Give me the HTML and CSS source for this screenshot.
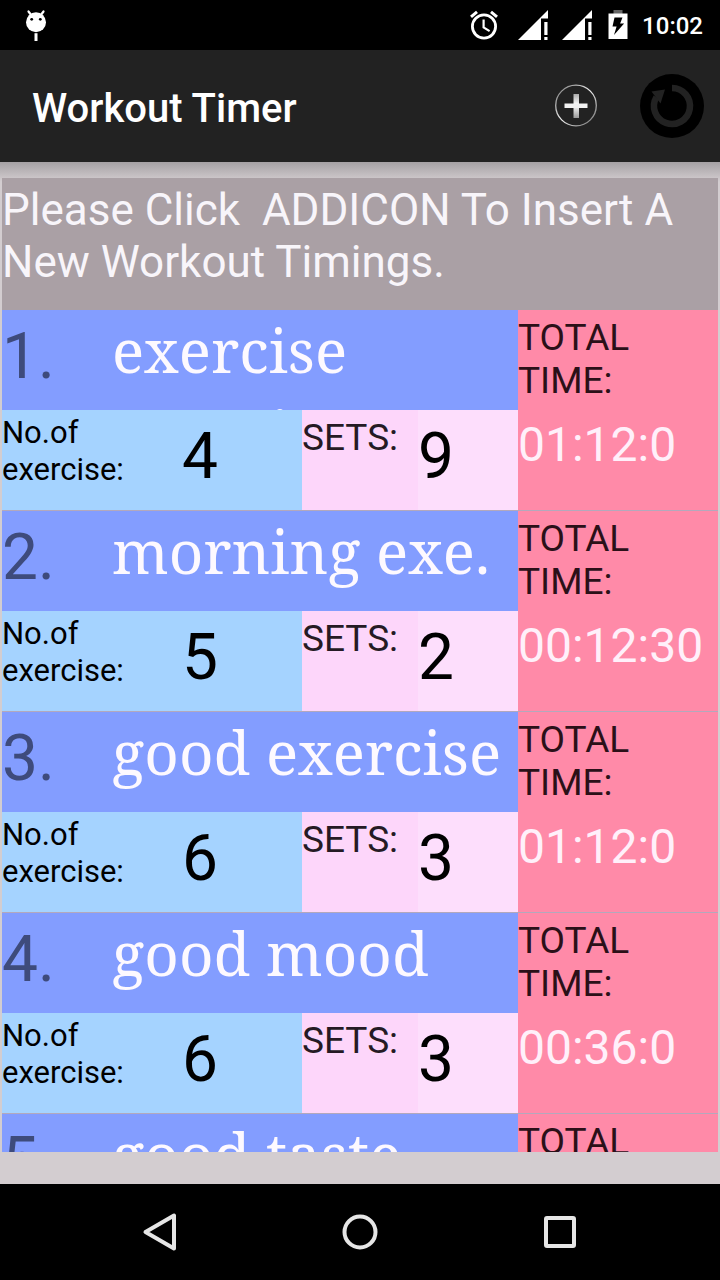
FILE: index.html
```html
<!DOCTYPE html>
<html lang="en">
<head>
    <meta charset="UTF-8">
    <meta name="viewport" content="width=device-width, initial-scale=1.0">
    <title>Workout Timer</title>
    <link rel="stylesheet" href="styles.css">
</head>
<body>
    <div class="statusBar">
        <svg class="droid" width="24" height="34" viewBox="0 0 24 34">
            <path d="M4.500 2.500l3 4M19.500 2.500l-3 4" stroke="#fff" stroke-width="2.200" stroke-linecap="round"/>
            <circle cx="12" cy="13.200" r="10" fill="#fff"/>
            <circle cx="7.700" cy="10.300" r="1.400"/>
            <circle cx="16.300" cy="10.300" r="1.400"/>
            <path d="M10.500 24.200h3v7.800h-3z" fill="#fff"/>
        </svg>
        <svg class="alarm" width="30" height="30" viewBox="0 0 30 30" fill="none" stroke="#fff">
            <circle cx="15" cy="16.500" r="11.600" stroke-width="2.800"/>
            <path d="M2 6.800l6-5M28 6.800l-6-5" stroke-width="3"/>
            <path d="M14.600 9.500v8l6 3.600" stroke-width="2.200"/>
        </svg>
        <svg class="signal" width="30" height="30" viewBox="0 0 30 30" fill="#fff">
            <path d="M0 30L30 0v8.500h-7V30z"/>
            <path d="M26.300 12h3.200v13h-3.200zM26.300 27h3.200v3h-3.200z"/>
        </svg>
        <svg class="signal" width="30" height="30" viewBox="0 0 30 30" fill="#fff">
            <path d="M0 30L30 0v8.500h-7V30z"/>
            <path d="M26.300 12h3.200v13h-3.200zM26.300 27h3.200v3h-3.200z"/>
        </svg>
        <svg class="battery" width="20" height="30" viewBox="0 0 20 30">
            <path d="M5.500 0h9v4h-9z" fill="#666"/>
            <path d="M.5 3.500h19V29H.5z" fill="#fff"/>
            <path d="M6.500 7.500h8l-2.400 6h4L6 25l2.600-8.500H4.500z"/>
        </svg>
        <span class="clock">10:02</span>
    </div>

    <div class="actionBar">
        <h1>Workout Timer</h1>
        <svg class="addBtn" width="44" height="44" viewBox="0 0 44 44">
            <defs>
                <linearGradient id="ring" x1="0" y1="0" x2="1" y2="1">
                    <stop offset="0" stop-color="#888"/>
                    <stop offset=".15" stop-color="#999"/>
                    <stop offset=".5" stop-color="#eee"/>
                    <stop offset=".8" stop-color="#999"/>
                    <stop offset="1" stop-color="#777"/>
                </linearGradient>
                <linearGradient id="bar" x1="0" y1="0" x2="0" y2="1">
                    <stop offset="0" stop-color="#aaa"/>
                    <stop offset=".45" stop-color="#fff"/>
                    <stop offset="1" stop-color="#999"/>
                </linearGradient>
            </defs>
            <circle cx="22" cy="21.500" r="20.300" fill="none" stroke="url(#ring)" stroke-width="1.300"/>
            <path d="M19.500 10h5.500v24h-5.500z" fill="url(#bar)"/>
            <path d="M10.500 19.500h23v4.500h-23z" fill="#f2f2f2"/>
        </svg>
        <svg class="resetBtn" width="64" height="64" viewBox="0 0 64 64">
            <circle cx="32" cy="32" r="32"/>
            <path d="M32 14a18 18 0 1 1-15.600 9" fill="none" stroke="#222" stroke-width="6.500"/>
            <path d="M11.500 17.500L25 15.500l-4.500 14z" fill="#222"/>
        </svg>
    </div>

    <div class="content">
        <p class="hint">Please Click&nbsp; ADDICON To Insert A<br>New Workout Timings.</p>

        <div class="list">
            <div class="workout">
                <div class="info">
                    <div class="top"><span class="no">1.</span><span class="name">exercise<br>morning</span></div>
                    <div class="bottom">
                        <span class="exLabel">No.of<br>exercise:</span><span class="exCount">4</span>
                        <span class="setsLabel">SETS:</span><span class="sets">9</span>
                    </div>
                </div>
                <div class="total"><div class="totalLabel">TOTAL TIME:</div><div class="time">01:12:0</div></div>
            </div>
            <div class="workout">
                <div class="info">
                    <div class="top"><span class="no">2.</span><span class="name">morning exe.</span></div>
                    <div class="bottom">
                        <span class="exLabel">No.of<br>exercise:</span><span class="exCount">5</span>
                        <span class="setsLabel">SETS:</span><span class="sets">2</span>
                    </div>
                </div>
                <div class="total"><div class="totalLabel">TOTAL TIME:</div><div class="time">00:12:30</div></div>
            </div>
            <div class="workout">
                <div class="info">
                    <div class="top"><span class="no">3.</span><span class="name">good exercise</span></div>
                    <div class="bottom">
                        <span class="exLabel">No.of<br>exercise:</span><span class="exCount">6</span>
                        <span class="setsLabel">SETS:</span><span class="sets">3</span>
                    </div>
                </div>
                <div class="total"><div class="totalLabel">TOTAL TIME:</div><div class="time">01:12:0</div></div>
            </div>
            <div class="workout">
                <div class="info">
                    <div class="top"><span class="no">4.</span><span class="name">good mood</span></div>
                    <div class="bottom">
                        <span class="exLabel">No.of<br>exercise:</span><span class="exCount">6</span>
                        <span class="setsLabel">SETS:</span><span class="sets">3</span>
                    </div>
                </div>
                <div class="total"><div class="totalLabel">TOTAL TIME:</div><div class="time">00:36:0</div></div>
            </div>
            <div class="workout">
                <div class="info">
                    <div class="top"><span class="no">5.</span><span class="name">good taste</span></div>
                </div>
                <div class="total"><div class="totalLabel">TOTAL</div></div>
            </div>
        </div>
    </div>

    <div class="navBar">
        <svg width="40" height="40" viewBox="0 0 40 40"><path d="M34 3.500v33L5.500 20z"/></svg>
        <svg width="40" height="40" viewBox="0 0 40 40"><circle cx="20" cy="20" r="15.500"/></svg>
        <svg width="40" height="40" viewBox="0 0 40 40"><rect x="6" y="6" width="28" height="28" rx="1"/></svg>
    </div>
</body>
</html>
```
FILE: styles.css
```css
* {
    box-sizing: border-box;
}
body {
    margin: 0;
    width: 720px;
    height: 1280px;
    display: flex;
    flex-direction: column;
    overflow: hidden;
    background: #d3cdd0;
    font-family: Roboto, sans-serif;
}
svg {
    display: block;
    flex: none;
}
.statusBar {
    flex: none;
    display: flex;
    height: 50px;
    padding: 0 17px 0 24px;
    background: #000;
    color: #fff;
}
.droid {
    margin-top: 9px;
}
.alarm {
    margin: 10px 19px 0 auto;
}
.signal {
    margin: 10px 14px 0 0;
}
.battery {
    margin: 10px 14px 0 2px;
}
.clock {
    font-size: 24px;
    font-weight: 500;
    line-height: 52px;
}
.actionBar {
    flex: none;
    display: flex;
    align-items: center;
    height: 112px;
    padding: 0 16px 0 32px;
    background: #222;
}
.actionBar h1 {
    margin: 4px auto 0 0;
    color: #fff;
    font-size: 40px;
    font-weight: 500;
}
.addBtn {
    margin-right: 42px;
}
.content {
    height: 1022px;
    padding: 16px 2px 32px;
    background: linear-gradient(#a5a1a4, #cbc5c8 16px, #d3cdd0 20px);
}
.hint {
    margin: 0;
    height: 132px;
    padding-top: 6px;
    background: #aaa0a5;
    color: #f8f5fa;
    font-size: 44px;
    line-height: 52px;
    white-space: nowrap;
}
.list {
    height: 842px;
    overflow: hidden;
}
.workout {
    display: flex;
    height: 201px;
    border-bottom: 1px solid #b3a8bc;
}
.info {
    width: 516px;
    background: #839dff;
}
.top {
    display: flex;
    height: 100px;
    overflow: hidden;
}
.no {
    width: 110px;
    padding-top: 9px;
    color: #3e4b7c;
    font-size: 64px;
    line-height: 75px;
}
.name {
    margin-top: -1px;
    color: #fdf9ff;
    font-family: "Noto Serif", "DejaVu Serif", serif;
    font-size: 60px;
    line-height: 82px;
    white-space: nowrap;
}
.bottom {
    display: flex;
    height: 100px;
}
.exLabel {
    width: 180px;
    padding-top: 4px;
    background: #a5d3ff;
    font-size: 31px;
    line-height: 37px;
}
.exCount {
    width: 120px;
    padding-top: 9px;
    background: #a5d3ff;
    font-size: 64px;
    line-height: 75px;
}
.setsLabel {
    width: 116px;
    padding-top: 6px;
    background: #fdd6fa;
    color: #251a24;
    font-size: 37px;
    line-height: 43px;
}
.sets {
    width: 100px;
    padding-top: 9px;
    background: #fddefc;
    font-size: 64px;
    line-height: 75px;
}
.total {
    width: 200px;
    background: #ff8aa8;
}
.totalLabel {
    height: 100px;
    padding: 6px 60px 0 0;
    color: #2b1018;
    font-size: 37px;
    line-height: 43px;
}
.time {
    padding-top: 7px;
    color: #fff0fa;
    font-size: 48px;
    line-height: 56px;
}
.navBar {
    display: flex;
    flex: 1;
    align-items: center;
    justify-content: center;
    gap: 160px;
    background: #000;
}
.navBar svg {
    fill: none;
    stroke: #e6e6e6;
    stroke-width: 4;
    stroke-linejoin: round;
}
```
